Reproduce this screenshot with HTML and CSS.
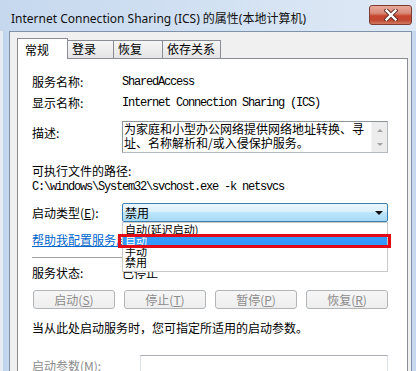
FILE: index.html
```html
<!DOCTYPE html>
<html lang="zh-CN">
<head>
<meta charset="utf-8">
<title>Internet Connection Sharing (ICS) 的属性(本地计算机)</title>
<link rel="stylesheet" href="styles.css">
</head>
<body>
<div class="window">
  <div class="titlebar">
    <span class="title">Internet Connection Sharing (ICS) 的属性(本地计算机)</span>
    <div class="close">
      <svg width="14" height="12" viewBox="0 0 14 12">
        <path d="M2.5 1.5 L11.5 10.5 M11.5 1.5 L2.5 10.5" stroke="#5a2a24" stroke-width="4.2" stroke-linecap="square" fill="none"/>
        <path d="M2.5 1.5 L11.5 10.5 M11.5 1.5 L2.5 10.5" stroke="#ffffff" stroke-width="2.4" stroke-linecap="square" fill="none"/>
      </svg>
    </div>
  </div>
  <div class="frame">
    <div class="client">
      <div class="tabs">
        <div class="tab active">常规</div>
        <div class="tab">登录</div>
        <div class="tab">恢复</div>
        <div class="tab">依存关系</div>
      </div>
      <div class="panel">
        <div class="row">
          <span class="label">服务名称:</span>
          <span class="mono">SharedAccess</span>
        </div>
        <div class="row gap5">
          <span class="label">显示名称:</span>
          <span class="mono">Internet Connection Sharing (ICS)</span>
        </div>
        <div class="row desc">
          <span class="label desc-label">描述:</span>
          <div class="textarea">
            <div class="textarea-text">为家庭和小型办公网络提供网络地址转换、寻址、名称解析和/或入侵保护服务。</div>
            <div class="scrollbar">
              <span class="arrow-up"></span>
              <span class="arrow-down"></span>
            </div>
          </div>
        </div>
        <div class="row gap10">
          <span>可执行文件的路径:</span>
        </div>
        <div class="row">
          <span class="mono">C:\windows\System32\svchost.exe -k netsvcs</span>
        </div>
        <div class="row select-row">
          <span class="label">启动类型(<u>E</u>):</span>
          <div class="select">
            <span class="select-value">禁用</span>
            <span class="select-arrow"></span>
            <div class="dropdown">
              <div class="option">自动(延迟启动)</div>
              <div class="option selected">自动</div>
              <div class="option">手动</div>
              <div class="option">禁用</div>
              <div class="mark"></div>
            </div>
          </div>
        </div>
        <div class="row gap10">
          <span class="link">帮助我配置服务启动选项。</span>
        </div>
        <div class="separator"></div>
        <div class="row gap7">
          <span class="label">服务状态:</span>
          <span>已停止</span>
        </div>
        <div class="buttons">
          <div class="btn">启动(<u>S</u>)</div>
          <div class="btn">停止(<u>T</u>)</div>
          <div class="btn">暂停(<u>P</u>)</div>
          <div class="btn">恢复(<u>R</u>)</div>
        </div>
        <div class="row gap11">
          <span>当从此处启动服务时，您可指定所适用的启动参数。</span>
        </div>
        <div class="row params">
          <span class="label param-label">启动参数(<u>M</u>):</span>
          <div class="input"></div>
        </div>
      </div>
    </div>
  </div>
</div>
</body>
</html>
```
FILE: styles.css
```css
* { box-sizing: border-box; }
html, body { margin: 0; padding: 0; }
body {
  width: 416px;
  height: 371px;
  overflow: hidden;
  font-family: "Noto Sans CJK SC", "Noto Sans", sans-serif;
  font-size: 12px;
  color: #000;
  background: #c8daee;
}
.window {
  width: 416px;
  height: 371px;
  display: flex;
  flex-direction: column;
}
.titlebar {
  height: 31px;
  flex: none;
  display: flex;
  justify-content: space-between;
  align-items: flex-start;
  padding-left: 11px;
  background: linear-gradient(to right, #c6d8ee 0%, #d3e2f3 55%, #dfe9f5 100%);
}
.title {
  margin-top: 11px;
  line-height: 16px;
  font-family: "Noto Sans", "Noto Sans CJK SC", sans-serif;
  font-size: 12px;
  color: #111;
  white-space: nowrap;
}
.close {
  width: 43px;
  height: 20px;
  margin-top: 5px;
  margin-right: 4px;
  border: 1px solid #7e3b32;
  border-radius: 3px;
  background: linear-gradient(#e9a99b 0%, #d98a78 40%, #c8452f 55%, #c14a33 80%, #d27a62 100%);
  display: flex;
  align-items: center;
  justify-content: center;
}
.frame {
  flex: 1;
  display: flex;
  padding: 0 4px 0 9px;
  background: linear-gradient(to right, #e6ebf1 0, #e6ebf1 3px, #bcd3ec 3px, #c7d9ee 9px);
}
.client {
  flex: 1;
  display: flex;
  flex-direction: column;
  background: #f0f0f0;
  border: 1px solid #7f92aa;
  border-bottom: none;
  padding: 6px 3px 0 7px;
}
.tabs {
  display: flex;
  align-items: flex-end;
  height: 20px;
  flex: none;
}
.tab {
  height: 18px;
  line-height: 16px;
  border: 1px solid #898c95;
  border-bottom: none;
  margin-right: -1px;
  padding-left: 4px;
  background: linear-gradient(#f6f6f6, #e4e4e4);
  white-space: nowrap;
}
.tab:nth-child(1) { width: 51px; }
.tab:nth-child(2) { width: 47px; }
.tab:nth-child(3) { width: 50px; }
.tab:nth-child(4) { width: 59px; }
.tab.active {
  height: 21px;
  margin-bottom: -1px;
  padding-left: 7px;
  padding-top: 3px;
  background: #fff;
  position: relative;
  z-index: 2;
}
.panel {
  flex: 1;
  background: #fff;
  border: 1px solid #898c95;
  border-bottom: none;
  padding: 15px 19px 0 14px;
  display: flex;
  flex-direction: column;
}
.row {
  display: flex;
  align-items: center;
  height: 16px;
  line-height: 16px;
  flex: none;
  white-space: nowrap;
}
.gap5 { margin-top: 5px; }
.gap7 { margin-top: 7px; }
.gap10 { margin-top: 10px; }
.gap11 { margin-top: 11px; }
.label { width: 90px; flex: none; }
.mono {
  font-family: "Liberation Mono", monospace;
  font-size: 12px;
  letter-spacing: -1.2px;
}
.desc {
  height: 32px;
  margin-top: 10px;
  align-items: flex-start;
}
.desc-label { margin-top: 4px; }
.textarea {
  flex: 1;
  height: 32px;
  display: flex;
  border: 1px solid #b5b9c0;
  border-top-color: #8e949c;
  border-left-color: #8e949c;
}
.textarea-text {
  flex: 1;
  white-space: normal;
  line-height: 14px;
  padding-left: 1px;
}
.scrollbar {
  width: 16px;
  flex: none;
  background: #ececec;
  border-left: 1px solid #f4f4f4;
  display: flex;
  flex-direction: column;
  justify-content: space-between;
  align-items: center;
  padding: 7px 0 6px;
}
.arrow-up {
  width: 0; height: 0;
  border-left: 3px solid transparent;
  border-right: 3px solid transparent;
  border-bottom: 3px solid #a2a2a2;
}
.arrow-down {
  width: 0; height: 0;
  border-left: 3px solid transparent;
  border-right: 3px solid transparent;
  border-top: 3px solid #a2a2a2;
}
.select-row {
  height: 19px;
  margin-top: 8px;
  overflow: visible;
}
.select {
  flex: 1;
  height: 19px;
  position: relative;
  border: 1px solid #3c7fb1;
  border-radius: 2px;
  background: linear-gradient(#eaf6fd 0%, #d9f0fc 45%, #bee6fd 50%, #a7d9f5 100%);
  display: flex;
  align-items: center;
  padding-left: 2px;
  line-height: 16px;
}
.select-value { flex: 1; }
.select-arrow {
  width: 0; height: 0;
  margin-right: 4px;
  border-left: 4px solid transparent;
  border-right: 4px solid transparent;
  border-top: 4px solid #111;
}
.dropdown {
  position: absolute;
  top: 18px;
  left: -1px;
  right: -1px;
  height: 50px;
  background: #fff;
  border: 1px solid #c9c9c9;
  padding-top: 1px;
  z-index: 5;
  font-size: 11px;
}
.option {
  height: 11px;
  line-height: 11px;
  padding-left: 2px;
  overflow: visible;
}
.option.selected {
  background: #3399ff;
  color: #fff;
}
.mark {
  position: absolute;
  top: 11px;
  left: -5px;
  right: -4px;
  height: 14px;
  border: 3px solid #e20a16;
}
.link {
  color: #0066cc;
  text-decoration: underline;
}
.separator {
  height: 1px;
  margin-top: 9px;
  background: #a0a0a0;
  flex: none;
}
.buttons {
  display: grid;
  grid-template-columns: repeat(4, 1fr);
  column-gap: 9px;
  margin-top: 9px;
  padding-left: 1px;
  flex: none;
}
.btn {
  height: 19px;
  line-height: 17px;
  border: 1px solid #b1b5b8;
  border-radius: 3px;
  background: linear-gradient(#f6f6f6, #eeeeee);
  color: #8c8c8c;
  text-align: center;
}
.params {
  margin-top: 19px;
  height: 22px;
  align-items: flex-start;
  color: #8c8c8c;
}
.param-label { width: 108px; margin-top: 3px; }
.input {
  flex: 1;
  height: 22px;
  border: 1px solid #abadb3;
  border-bottom-color: #e3e9ef;
  border-left-color: #dbdfe6;
  border-right-color: #dbdfe6;
}
```
